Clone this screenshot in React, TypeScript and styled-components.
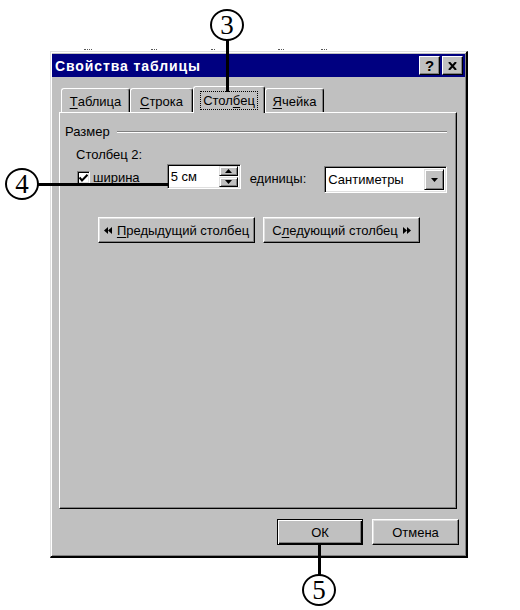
import styled, { createGlobalStyle } from 'styled-components';

const GlobalStyle = createGlobalStyle`
  html, body {
    margin: 0;
    padding: 0;
    background: #fff;
  }
  body {
    font-family: "Liberation Sans", Arial, sans-serif;
    color: #000;
  }
`

const Page = styled.div`
  position: relative;
  width: 520px;
  height: 610px;
  padding: 51px 0 0 50px;
  box-sizing: border-box;
  overflow: hidden;
`

const Dialog = styled.div`
  width: 418px;
  height: 507px;
  box-sizing: border-box;
  background: #c0c0c0;
  border-top: 1px solid #dfdfdf;
  border-left: 1px solid #dfdfdf;
  border-right: 2px solid #000;
  border-bottom: 2px solid #000;
  box-shadow: inset 1px 1px #fff, inset -1px -1px #808080;
  padding: 2px 1px;
  display: flex;
  flex-direction: column;
`

const TitleBar = styled.div`
  height: 23px;
  background: #000080;
  display: flex;
  align-items: center;
  justify-content: space-between;
  padding: 0 2px 0 3px;
`

const Title = styled.span`
  color: #fff;
  font-weight: bold;
  font-size: 14px;
  letter-spacing: 0.9px;
`

const TitleButtons = styled.div`
  display: flex;
  gap: 2px;
`

const TitleButton = styled.div`
  width: 21px;
  height: 19px;
  box-sizing: border-box;
  background: #c0c0c0;
  border-top: 1px solid #fff;
  border-left: 1px solid #fff;
  border-right: 1px solid #000;
  border-bottom: 1px solid #000;
  box-shadow: inset -1px -1px #808080;
  display: flex;
  align-items: center;
  justify-content: center;
  font-weight: bold;
  font-size: 15px;
  line-height: 1;
`

const Body = styled.div`
  flex: 1;
  display: flex;
  flex-direction: column;
  padding: 9px 8px 0 7px;
`

const TabRow = styled.div`
  display: flex;
  align-items: flex-end;
  padding-left: 2px;
  height: 26px;
  position: relative;
  z-index: 1;
`

const Tab = styled.div<{ $active?: boolean; $w: number }>`
  width: ${p => p.$w}px;
  height: ${p => (p.$active ? 27 : 24)}px;
  margin-bottom: ${p => (p.$active ? -1 : 0)}px;
  box-sizing: border-box;
  background: #c0c0c0;
  border-top: 1px solid #fff;
  border-left: 1px solid #fff;
  border-right: 1px solid #000;
  border-radius: 3px 3px 0 0;
  box-shadow: inset -1px 0 #808080;
  display: flex;
  align-items: center;
  justify-content: center;
  font-size: 13px;
  padding-top: ${p => (p.$active ? 0 : 2)}px;
`

const Focus = styled.span`
  border: 1px dotted #000;
  padding: 1px 2px;
`

const U = styled.span`
  text-decoration: underline;
  text-underline-offset: 2px;
`

const Panel = styled.div`
  height: 397px;
  box-sizing: border-box;
  border-top: 1px solid #fff;
  border-left: 1px solid #fff;
  border-right: 1px solid #000;
  border-bottom: 1px solid #000;
  box-shadow: inset -1px -1px #808080;
  padding: 11px 9px 0 5px;
  font-size: 13px;
`

const GroupHeader = styled.div`
  display: flex;
  align-items: center;
  gap: 7px;
  height: 15px;
`

const GroupLine = styled.div`
  flex: 1;
  height: 1px;
  background: #808080;
  border-bottom: 1px solid #fff;
`

const GroupBody = styled.div`
  padding-left: 11px;
`

const Caption = styled.div`
  margin-top: 8px;
  height: 15px;
`

const FieldRow = styled.div`
  display: flex;
  align-items: flex-start;
  margin-top: 2px;
  height: 29px;
`

const CheckLabel = styled.label`
  width: 90px;
  display: flex;
  align-items: center;
  gap: 3px;
  margin-top: 6px;
  padding-left: 1px;
`

const CheckBox = styled.span`
  width: 13px;
  height: 13px;
  box-sizing: border-box;
  background: #fff;
  border-top: 1px solid #808080;
  border-left: 1px solid #808080;
  border-right: 1px solid #fff;
  border-bottom: 1px solid #fff;
  box-shadow: inset 1px 1px #000, inset -1px -1px #dfdfdf;
  display: flex;
  align-items: center;
  justify-content: center;
`

const Sunken = styled.div<{ $w: number; $h: number; $drop?: number }>`
  width: ${p => p.$w}px;
  height: ${p => p.$h}px;
  margin-top: ${p => p.$drop ?? 0}px;
  box-sizing: border-box;
  background: #fff;
  border-top: 1px solid #808080;
  border-left: 1px solid #808080;
  border-right: 1px solid #fff;
  border-bottom: 1px solid #fff;
  box-shadow: inset 1px 1px #000, inset -1px -1px #dfdfdf;
  display: flex;
  align-items: center;
  padding: 2px 2px 2px 3px;
`

const FieldText = styled.span`
  flex: 1;
  font-size: 13px;
`

const SpinColumn = styled.div`
  display: flex;
  flex-direction: column;
  gap: 1px;
`

const SmallButton = styled.div<{ $w: number; $h: number }>`
  width: ${p => p.$w}px;
  height: ${p => p.$h}px;
  box-sizing: border-box;
  background: #c0c0c0;
  border-top: 1px solid #dfdfdf;
  border-left: 1px solid #dfdfdf;
  border-right: 1px solid #000;
  border-bottom: 1px solid #000;
  box-shadow: inset 1px 1px #fff, inset -1px -1px #808080;
  display: flex;
  align-items: center;
  justify-content: center;
`

const UnitLabel = styled.span`
  margin: 7px 18px 0 9px;
`

const NavRow = styled.div`
  display: flex;
  gap: 8px;
  margin-top: 24px;
  padding-left: 22px;
`

const Button = styled.div<{ $w: number; $default?: boolean }>`
  width: ${p => p.$w}px;
  height: 26px;
  box-sizing: border-box;
  background: #c0c0c0;
  border: 1px solid #000;
  border-top-color: ${p => (p.$default ? '#000' : '#fff')};
  border-left-color: ${p => (p.$default ? '#000' : '#fff')};
  box-shadow: ${p =>
    p.$default
      ? 'inset 1px 1px #fff, inset -1px -1px #000, inset -2px -2px #808080'
      : 'inset -1px -1px #808080, inset 1px 1px #dfdfdf'};
  display: flex;
  align-items: center;
  justify-content: center;
  gap: 5px;
  font-size: 13px;
`

const Footer = styled.div`
  display: flex;
  justify-content: flex-end;
  gap: 9px;
  margin: 10px -2px 0 0;
`

const Callout = styled.div<{ $x: number; $y: number }>`
  position: absolute;
  left: ${p => p.$x - 17}px;
  top: ${p => p.$y - 16}px;
  width: 34px;
  height: 32px;
  box-sizing: border-box;
  border: 2.5px solid #000;
  border-radius: 50%;
  background: #fff;
  display: flex;
  align-items: center;
  justify-content: center;
  font-family: "Liberation Serif", "Times New Roman", serif;
  font-size: 27px;
  line-height: 1;
  padding-top: 1px;
  z-index: 3;
`

const Leader = styled.div<{ $x: number; $y: number; $w: number; $h: number }>`
  position: absolute;
  left: ${p => p.$x}px;
  top: ${p => p.$y}px;
  width: ${p => p.$w}px;
  height: ${p => p.$h}px;
  background: #000;
  z-index: 2;
`

const Tick = styled.div<{ $x: number; $y: number; $w: number }>`
  position: absolute;
  left: ${p => p.$x}px;
  top: ${p => p.$y}px;
  width: ${p => p.$w}px;
  height: 1px;
  border-top: 1px dotted #555;
`

const Arrow = ({ dir }: { dir: 'up' | 'down' }) => (
  <svg width="7" height="4" viewBox="0 0 7 4">
    <polygon points={dir === 'up' ? '3.5,0 7,4 0,4' : '0,0 7,0 3.5,4'} fill="#000" />
  </svg>
)

const DoubleArrow = ({ dir }: { dir: 'left' | 'right' }) => (
  <svg width="8" height="7" viewBox="0 0 8 7">
    {dir === 'left' ? (
      <>
        <polygon points="4,0 4,7 0,3.5" fill="#000" />
        <polygon points="8,0 8,7 4,3.5" fill="#000" />
      </>
    ) : (
      <>
        <polygon points="0,0 0,7 4,3.5" fill="#000" />
        <polygon points="4,0 4,7 8,3.5" fill="#000" />
      </>
    )}
  </svg>
)

function App() {
  return (
    <Page>
      <GlobalStyle />
      <Tick $x={84} $y={49} $w={8} />
      <Tick $x={151} $y={49} $w={6} />
      <Tick $x={211} $y={49} $w={4} />
      <Tick $x={278} $y={49} $w={6} />
      <Tick $x={321} $y={49} $w={6} />

      <Dialog>
        <TitleBar>
          <Title>Свойства таблицы</Title>
          <TitleButtons>
            <TitleButton>?</TitleButton>
            <TitleButton>
              <svg width="9" height="8" viewBox="0 0 9 8">
                <path d="M1 0 L8 8 M8 0 L1 8" stroke="#000" strokeWidth="2" />
              </svg>
            </TitleButton>
          </TitleButtons>
        </TitleBar>

        <Body>
          <TabRow>
            <Tab $w={69}><U>Т</U>аблица</Tab>
            <Tab $w={63}><U>С</U>трока</Tab>
            <Tab $w={72} $active><Focus>Стол<U>б</U>ец</Focus></Tab>
            <Tab $w={59}><U>Я</U>чейка</Tab>
          </TabRow>

          <Panel>
            <GroupHeader>
              <span>Размер</span>
              <GroupLine />
            </GroupHeader>
            <GroupBody>
              <Caption>Столбец 2:</Caption>
              <FieldRow>
                <CheckLabel>
                  <CheckBox>
                    <svg width="9" height="8" viewBox="0 0 9 8">
                      <path d="M0.5 3.5 L3 6.5 L8.5 0.8" stroke="#000" strokeWidth="2" fill="none" />
                    </svg>
                  </CheckBox>
                  ширина
                </CheckLabel>
                <Sunken $w={74} $h={25}>
                  <FieldText>5 см</FieldText>
                  <SpinColumn>
                    <SmallButton $w={19} $h={10}><Arrow dir="up" /></SmallButton>
                    <SmallButton $w={19} $h={10}><Arrow dir="down" /></SmallButton>
                  </SpinColumn>
                </Sunken>
                <UnitLabel>е<U>д</U>иницы:</UnitLabel>
                <Sunken $w={123} $h={27} $drop={2}>
                  <FieldText>Сантиметры</FieldText>
                  <SmallButton $w={20} $h={21}><Arrow dir="down" /></SmallButton>
                </Sunken>
              </FieldRow>
              <NavRow>
                <Button $w={157}>
                  <DoubleArrow dir="left" />
                  <span><U>П</U>редыдущий столбец</span>
                </Button>
                <Button $w={157}>
                  <span>С<U>л</U>едующий столбец</span>
                  <DoubleArrow dir="right" />
                </Button>
              </NavRow>
            </GroupBody>
          </Panel>

          <Footer>
            <Button $w={86} $default>ОК</Button>
            <Button $w={87}>Отмена</Button>
          </Footer>
        </Body>
      </Dialog>

      <Callout $x={227} $y={25}>3</Callout>
      <Leader $x={226} $y={40} $w={3} $h={52} />
      <Callout $x={22} $y={184}>4</Callout>
      <Leader $x={38} $y={183} $w={130} $h={3} />
      <Callout $x={319} $y={590}>5</Callout>
      <Leader $x={318} $y={545} $w={3} $h={30} />
    </Page>
  )
}

export default App
